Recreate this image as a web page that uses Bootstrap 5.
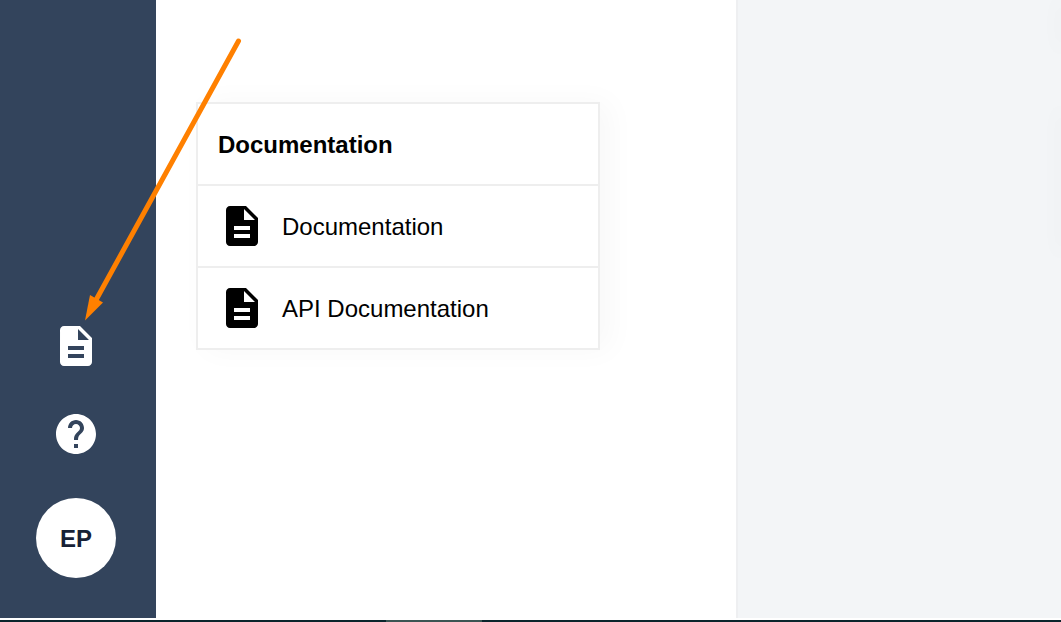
<!DOCTYPE html>
<html lang="en">
<head>
<meta charset="utf-8">
<meta name="viewport" content="width=device-width, initial-scale=1">
<title>Documentation</title>
<link href="https://cdn.jsdelivr.net/npm/bootstrap@5.3.0/dist/css/bootstrap.min.css" rel="stylesheet">
<style>
  body { font-family: "Liberation Sans", Arial, sans-serif; font-size: 24px; line-height: 32px; color: #000; background: #fff; }
  .side-rail { width: 156px; padding: 0 4px 40px 0; gap: 40px; background: #33445c; }
  .rail-btn { line-height: 0; color: #fff; }
  .avatar { width: 80px; height: 80px; padding: 2px 0 0; background: #fff; color: #172135; font-size: 24px; }
  .content-pane { width: 580px; padding: 102px 40px 0; }
  .doc-menu { width: 404px; border: 2px solid #eee; background: #fff; box-shadow: 10px 0 28px rgba(0, 0, 0, .03); }
  .doc-row { height: 82px; padding: 0 20px; gap: 16px; color: #000; border-top: 2px solid #eee; }
  .doc-label { padding-top: 2px; }
  .doc-title { height: 80px; padding: 2px 20px 0; font-size: 24px; line-height: 32px; }
  .side-panel { background: #f3f5f7; border-left: 2px solid #eeeff1; }
  .panel-cards { gap: 60px; }
  .panel-tile { width: 0; height: 144px; box-shadow: 0 0 20px 2px rgba(0, 0, 0, .06); }
  .panel-tile.first-tile { height: 50px; }
  .status-line { height: 2px; margin-top: 2px; background: #0a252c; }
  .status-active { width: 96px; margin-left: 386px; background: #3b5553; }
  .pointer-arrow { top: 0; left: 0; }
</style>
</head>
<body>
<div class="d-flex flex-column vh-100 overflow-hidden position-relative">
  <div class="d-flex flex-grow-1">
    <nav class="side-rail d-flex flex-column align-items-center justify-content-end flex-shrink-0" aria-label="Main">
      <button type="button" class="rail-btn border-0 bg-transparent p-0" aria-label="Documents">
        <svg width="48" height="48" viewBox="0 0 24 24" fill="currentColor"><path d="M14 2H6c-1.1 0-1.99.9-1.99 2L4 20c0 1.1.89 2 1.99 2H18c1.1 0 2-.9 2-2V8l-6-6zm2 16H8v-2h8v2zm0-4H8v-2h8v2zm-3-5V3.500L18.500 9H13z"/></svg>
      </button>
      <button type="button" class="rail-btn border-0 bg-transparent p-0" aria-label="Help">
        <svg width="48" height="48" viewBox="0 0 24 24" fill="currentColor"><path d="M12 2C6.480 2 2 6.480 2 12s4.480 10 10 10 10-4.480 10-10S17.520 2 12 2zm1 17h-2v-2h2v2zm2.070-7.750l-.9.920C13.450 12.900 13 13.500 13 15h-2v-.5c0-1.100.45-2.100 1.170-2.830l1.240-1.260c.37-.36.59-.86.59-1.410 0-1.100-.9-2-2-2s-2 .9-2 2H8c0-2.210 1.790-4 4-4s4 1.790 4 4c0 .88-.36 1.680-.93 2.250z"/></svg>
      </button>
      <button type="button" class="avatar rounded-circle border-0 fw-bold">EP</button>
    </nav>
    <main class="content-pane flex-shrink-0">
      <section class="doc-menu">
        <h1 class="doc-title d-flex align-items-center fw-bold m-0">Documentation</h1>
        <a href="#documentation" class="doc-row d-flex align-items-center text-decoration-none">
          <svg width="48" height="48" viewBox="0 0 24 24" fill="currentColor" aria-hidden="true"><path d="M14 2H6c-1.1 0-1.99.9-1.99 2L4 20c0 1.1.89 2 1.99 2H18c1.1 0 2-.9 2-2V8l-6-6zm2 16H8v-2h8v2zm0-4H8v-2h8v2zm-3-5V3.500L18.500 9H13z"/></svg>
          <span class="doc-label">Documentation</span>
        </a>
        <a href="#api" class="doc-row d-flex align-items-center text-decoration-none">
          <svg width="48" height="48" viewBox="0 0 24 24" fill="currentColor" aria-hidden="true"><path d="M14 2H6c-1.1 0-1.99.9-1.99 2L4 20c0 1.1.89 2 1.99 2H18c1.1 0 2-.9 2-2V8l-6-6zm2 16H8v-2h8v2zm0-4H8v-2h8v2zm-3-5V3.500L18.500 9H13z"/></svg>
          <span class="doc-label">API Documentation</span>
        </a>
      </section>
    </main>
    <aside class="side-panel flex-grow-1 overflow-hidden">
      <div class="panel-cards d-flex flex-column align-items-end">
        <div class="panel-tile first-tile"></div>
        <div class="panel-tile"></div>
      </div>
    </aside>
  </div>
  <footer class="status-line flex-shrink-0"><div class="status-active h-100"></div></footer>
  <svg class="pointer-arrow position-absolute pe-none" width="260" height="340" viewBox="0 0 260 340" aria-hidden="true">
    <path d="M238.500 41L96 300" stroke="#ff8000" stroke-width="5" stroke-linecap="round" fill="none"/>
    <path d="M85 320.500L90 295L103 302.500Z" fill="#ff8000"/>
  </svg>
</div>
<script src="https://cdn.jsdelivr.net/npm/bootstrap@5.3.0/dist/js/bootstrap.bundle.min.js"></script>
</body>
</html>
